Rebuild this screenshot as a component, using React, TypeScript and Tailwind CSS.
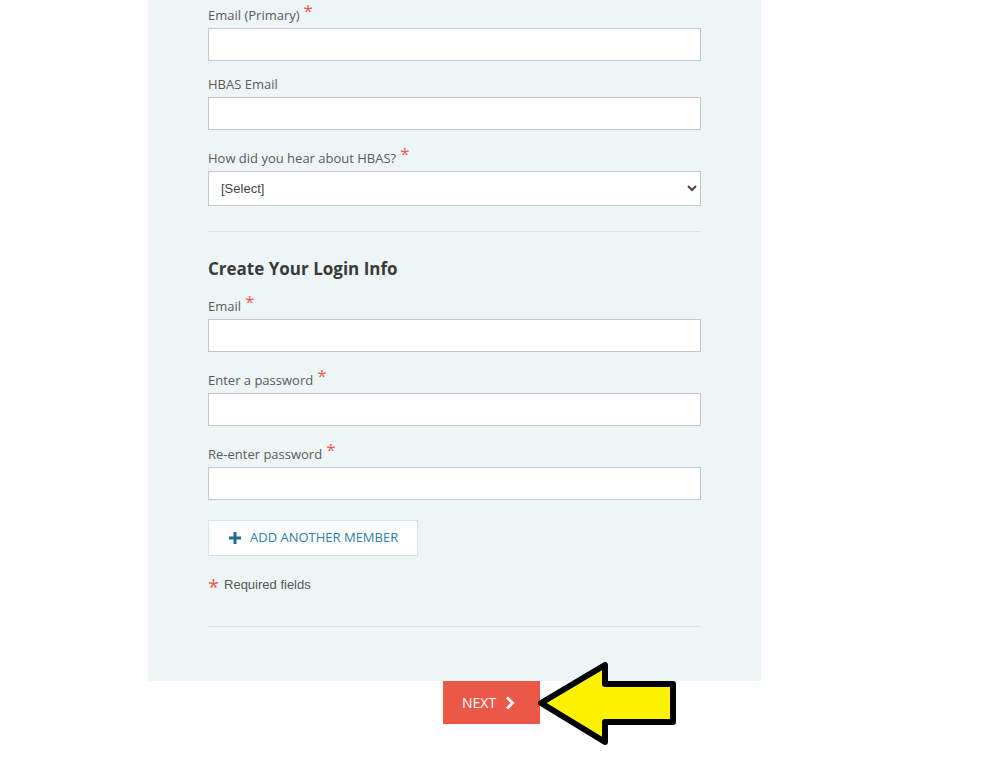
import React from "react";

const OPEN = { fontFamily: '"Open Sans", "Noto Sans", sans-serif' };
const ARIAL = { fontFamily: '"Liberation Sans", Arial, sans-serif' };

function Label({ text, req }: { text: string; req?: boolean }) {
  return (
    <div className="h-[20px] leading-[20px] text-[13px] text-[#5b5b5b]" style={OPEN}>
      {text}
      {req && (
        <span className="relative top-[-3px] ml-[4px] text-[17px] leading-none text-[#ea5a4b]">*</span>
      )}
    </div>
  );
}

function Input() {
  return (
    <input
      type="text"
      className="mt-[3px] block h-[33px] w-full border border-[#c6c6c6] bg-white px-3 outline-none"
    />
  );
}

export default function App() {
  return (
    <div className="relative h-[769px] w-[993px] overflow-hidden bg-white">
      <div className="ml-[148px] w-[613px] bg-[#edf5f7] px-[60px] pt-[5px] pb-[54px]">
        <Label text="Email (Primary)" req />
        <Input />
        <div className="mt-[13px]">
          <Label text="HBAS Email" />
          <Input />
        </div>
        <div className="mt-[18px]">
          <Label text="How did you hear about HBAS?" req />
          <select
            className="mt-[3px] block h-[35px] w-full border border-[#c6c6c6] bg-white pl-[8px] pr-2 text-[13px] text-[#444]"
            style={ARIAL}
            defaultValue="sel"
          >
            <option value="sel">[Select]</option>
          </select>
        </div>
        <div className="mt-[25px] h-px bg-[#dbe3e6]" />
        <h2 className="mt-[25px] h-[24px] text-[17px] font-bold leading-[24px] text-[#3a3a3a]" style={OPEN}>
          Create Your Login Info
        </h2>
        <div className="mt-[15px]">
          <Label text="Email" req />
          <Input />
        </div>
        <div className="mt-[18px]">
          <Label text="Enter a password" req />
          <Input />
        </div>
        <div className="mt-[18px]">
          <Label text="Re-enter password" req />
          <Input />
        </div>
        <button
          className="mt-[20px] flex h-[36px] w-[210px] items-center border border-[#d3e3e9] bg-white pl-[20px]"
          style={OPEN}
        >
          <svg width="12" height="12" viewBox="0 0 12 12" className="mr-[9px]">
            <rect x="4.5" y="0" width="3" height="12" fill="#1f6f8e" />
            <rect x="0" y="4.5" width="12" height="3" fill="#1f6f8e" />
          </svg>
          <span className="text-[13px] text-[#2c80a8]">ADD ANOTHER MEMBER</span>
        </button>
        <div className="mt-[19px] flex h-[20px] items-center text-[13px] text-[#555]" style={ARIAL}>
          <span className="relative top-[2px] mr-[5px] text-[20px] leading-none text-[#ea5a4b]" style={OPEN}>*</span>
          Required fields
        </div>
        <div className="mt-[31px] h-px bg-[#dbe3e6]" />
      </div>
      <div className="flex w-[993px]">
        <button
          className="ml-[443px] flex h-[43px] w-[97px] items-center bg-[#eb5848] pl-[19px] text-[14px] text-white"
          style={OPEN}
        >
          NEXT
          <svg width="10" height="14" viewBox="0 0 10 14" className="ml-[9px]">
            <path d="M2 1.5 L7.5 7 L2 12.5" fill="none" stroke="#fff" strokeWidth="3" />
          </svg>
        </button>
      </div>
      <svg
        className="absolute left-0 top-0"
        width="993"
        height="769"
        viewBox="0 0 993 769"
      >
        <path
          d="M541 703 L605 665 L605 684 L673 684 L673 722 L605 722 L605 742 Z"
          fill="#fff200"
          stroke="#000"
          strokeWidth="6"
          strokeLinejoin="round"
        />
      </svg>
    </div>
  );
}
